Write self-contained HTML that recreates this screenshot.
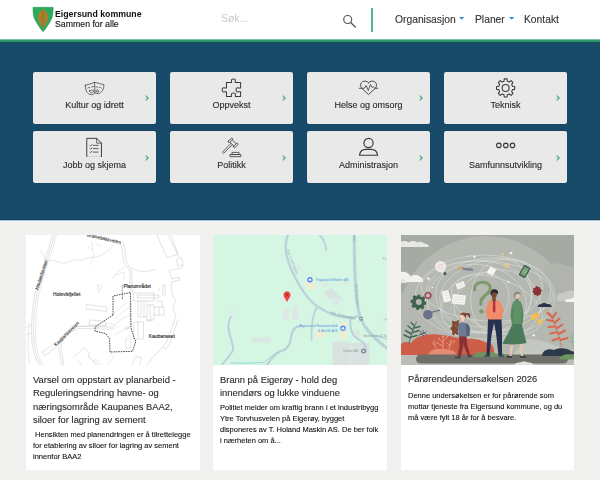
<!DOCTYPE html>
<html lang="no">
<head>
<meta charset="utf-8">
<title>Eigersund kommune</title>
<style>
*{box-sizing:border-box;margin:0;padding:0}
html,body{width:600px;height:480px;overflow:hidden;background:#f1f1f0;font-family:"Liberation Sans",sans-serif;color:#222}
.abs{position:absolute}
.brand1,.brand2,.sok,.nav,.tile .lbl,.card h3,.card p{will-change:transform}
#hdr{position:absolute;left:0;top:0;width:600px;height:39px;background:#fff}
#stripe{position:absolute;left:0;top:39px;width:600px;height:4px;z-index:2;background:linear-gradient(#7cc3a2 0,#7cc3a2 1px,#2f9e6b 1px,#2f9e6b 2px,#2b9068 2px,#2b9068 3px,#14535f 3px,#14535f 4px)}
#hero{position:absolute;left:0;top:42px;width:600px;height:178px;background:#184a69}
#heroline{position:absolute;left:0;top:219px;width:600px;height:3px;background:linear-gradient(#14405e 0,#14405e 1px,#a9c0cd 1px,#a9c0cd 2px,#eff4f7 2px,#eff4f7 3px)}
.brand1{position:absolute;left:54.6px;top:8.8px;font-size:8.75px;line-height:10.5px;font-weight:bold;color:#111;white-space:nowrap}
.brand2{position:absolute;left:54.6px;top:19.2px;font-size:8.75px;line-height:10.5px;color:#1a1a1a;-webkit-text-stroke:0.15px #1a1a1a;white-space:nowrap}
.sok{position:absolute;left:220.5px;top:13px;font-size:10.4px;line-height:12px;color:#c9c9c9;white-space:nowrap}
.vbar{position:absolute;left:371px;top:7.5px;width:1.6px;height:24.5px;background:#56b48c}
.nav{position:absolute;top:14px;font-size:10.3px;line-height:12px;color:#333;-webkit-text-stroke:0.12px #333;white-space:nowrap}
.caret{position:absolute;top:17.4px;width:5.4px;height:2.8px}
.tile{position:absolute;width:123px;height:52px;background:#e9e9e9;border-radius:2px;box-shadow:0 0 1px rgba(0,0,0,.2)}
.tile .lbl{position:absolute;left:0;width:123px;top:27.7px;text-align:center;font-size:9px;line-height:11px;color:#2a2a2a;-webkit-text-stroke:0.12px #2a2a2a;white-space:nowrap}
.tile svg.ic{position:absolute}
.tile.r2 .lbl{top:28.7px}
.tile.r2 svg.chev{top:23.6px}
.tile svg.chev{position:absolute;left:111.5px;top:23px;width:4px;height:6px}
.card{position:absolute;top:235px;width:174px;height:235px;background:#fff;overflow:hidden}
.card .img{position:absolute;left:0;top:0;width:174px;height:130px;overflow:hidden}
.card h3{position:absolute;left:7.3px;top:137.6px;width:160px;font-weight:normal;font-size:9.4px;line-height:13.4px;color:#2b2b2b;-webkit-text-stroke:0.12px #2b2b2b}
.card p{position:absolute;left:7.3px;font-size:7.5px;line-height:10.9px;color:#111;width:161px;-webkit-text-stroke:0.1px #111}
</style>
</head>
<body>
<div id="hdr"></div>
<div id="stripe"></div>
<div id="hero"></div>
<div id="heroline"></div>

<!-- logo -->
<svg class="abs" style="left:32px;top:6px" width="22" height="27" viewBox="32 6 22 27">
  <path d="M33,7.3 H53.1 C53.1,14 52.6,17 51,20 C49.4,23.2 47,27 43.05,31.8 C39.1,27 36.7,23.2 35.1,20 C33.5,17 33,14 33,7.3 Z" fill="#2cab5c" stroke="#23904c" stroke-width="0.5"/>
  <path d="M43.05,9 C44,9.8 45.6,10.2 45.3,11.9 C46.8,11.7 47.9,12.6 47.1,14.3 C48.5,14.6 48.9,16 47.6,17.4 C48.7,18.2 48.5,19.8 47,20.6 C47.8,21.7 47.2,23.2 45.7,23.6 C46.2,24.8 45.4,26.2 44,26.3 C44.1,27.3 43.6,28.2 43.3,28.5 L43.25,29.8 L42.85,29.8 L42.8,28.5 C42.5,28.2 42,27.3 42.1,26.3 C40.7,26.2 39.9,24.8 40.4,23.6 C38.9,23.2 38.3,21.7 39.1,20.6 C37.6,19.8 37.4,18.2 38.5,17.4 C37.2,16 37.6,14.6 39,14.3 C38.2,12.6 39.3,11.7 40.8,11.9 C40.5,10.2 42.1,9.8 43.05,9 Z" fill="#a9812e"/>
  <path d="M43.05,10.5 L43.05,28.5 M43.05,14.5 L45,12.8 M43.05,14.5 L41.1,12.8 M43.05,18.5 L45.8,16.3 M43.05,18.5 L40.3,16.3 M43.05,22.3 L45.3,20.3 M43.05,22.3 L40.8,20.3 M43.05,25.5 L44.5,24.2 M43.05,25.5 L41.6,24.2" fill="none" stroke="#8b6a22" stroke-width="0.45"/>
</svg>
<div class="brand1">Eigersund kommune</div>
<div class="brand2">Sammen for alle</div>

<div class="sok">Søk...</div>
<svg class="abs" style="left:341px;top:13px" width="17" height="16" viewBox="0 0 17 16">
  <circle cx="6.7" cy="6.5" r="4" fill="none" stroke="#555" stroke-width="1.15"/>
  <path d="M9.7 9.6 L14.3 14" stroke="#555" stroke-width="1.35" stroke-linecap="round"/>
</svg>
<div class="vbar"></div>
<div class="nav" style="left:394.6px">Organisasjon</div>
<svg class="caret" style="left:459.3px" viewBox="0 0 5.4 2.8"><path d="M0,0 H5.4 L2.7,2.8 Z" fill="#3b8fd0"/></svg>
<div class="nav" style="left:475px">Planer</div>
<svg class="caret" style="left:509.3px" viewBox="0 0 5.4 2.8"><path d="M0,0 H5.4 L2.7,2.8 Z" fill="#3b8fd0"/></svg>
<div class="nav" style="left:524px">Kontakt</div>

<!-- tiles -->
<div class="tile" style="left:33px;top:72px"><svg class="ic" style="left:45px;top:4px" width="32" height="24" viewBox="0 0 600 450"><g fill="none" stroke="#3a3a3a" stroke-linejoin="round" stroke-linecap="round" stroke-width="14" transform="translate(2,6)"><path d="M135,169 C160,160 215,146 248,135 C275,126 295,118 308,112 L315,311 C305,325 275,345 247,345 C222,340 205,332 195,326 C175,310 160,290 157,281 C145,255 138,225 135,169 Z"/><path d="M308,112 C330,118 355,124 375,128 C400,134 450,148 484,158 C484,175 482,195 480,206 C475,230 465,255 457,266 C448,282 432,300 420,307 C405,316 390,321 375,322 C355,323 340,321 330,319 L315,311"/><path d="M180,218 C195,210 210,208 221,211 M251,199 C265,192 280,190 292,192 M334,195 C348,194 360,199 368,206 M398,203 C412,203 427,209 435,218" stroke-width="13"/><path d="M214,274 C240,262 270,258 296,263 C292,290 275,306 255,308 C235,306 220,295 214,274 Z" stroke-width="13"/><path d="M334,282 C334,262 345,252 360,252 C375,252 386,262 386,282 Z" stroke-width="13"/></g></svg><div class="lbl">Kultur og idrett</div><svg class="chev" viewBox="0 0 4 6"><path d="M0.7 0.6 L3.2 3 L0.7 5.4" fill="none" stroke="#3aa877" stroke-width="1.1"/></svg></div>
<div class="tile" style="left:170px;top:72px"><svg class="ic" style="left:45px;top:2px" width="32" height="24" viewBox="0 0 600 450"><g fill="none" stroke="#3a3a3a" stroke-linejoin="round" stroke-linecap="round" stroke-width="19"><path d="M215,160 L312,160 L312,140 C298,100 325,95 345,95 C365,95 392,100 378,140 L378,160 L480,160 L480,262 L440,262 C400,250 395,278 395,298 C395,318 400,346 440,334 L480,334 L480,420 L382,420 L382,400 C392,362 365,358 345,358 C325,358 298,362 308,400 L308,420 L215,420 L215,334 L180,334 C140,346 135,318 135,298 C135,278 140,250 180,262 L215,262 Z"/></g></svg><div class="lbl">Oppvekst</div><svg class="chev" viewBox="0 0 4 6"><path d="M0.7 0.6 L3.2 3 L0.7 5.4" fill="none" stroke="#3aa877" stroke-width="1.1"/></svg></div>
<div class="tile" style="left:307px;top:72px"><svg class="ic" style="left:45px;top:2px" width="32" height="24" viewBox="0 0 600 450"><g fill="none" stroke="#3a3a3a" stroke-linejoin="round" stroke-linecap="round" stroke-width="17"><path d="M310,165 C280,128 228,124 195,146 C153,172 150,232 185,270 L310,385 L435,270 C470,232 467,172 425,146 C392,124 340,128 310,165 Z"/><path d="M135,268 L232,268 L266,215 L306,310 L346,195 L376,250 L400,240 L430,268 L482,268" stroke-width="15"/></g></svg><div class="lbl">Helse og omsorg</div><svg class="chev" viewBox="0 0 4 6"><path d="M0.7 0.6 L3.2 3 L0.7 5.4" fill="none" stroke="#3aa877" stroke-width="1.1"/></svg></div>
<div class="tile" style="left:444px;top:72px"><svg class="ic" style="left:45px;top:2px" width="32" height="24" viewBox="0 0 600 450"><g fill="none" stroke="#3a3a3a" stroke-linejoin="round" stroke-linecap="round" stroke-width="20"><path d="M281,134 L286,92 L338,92 L343,134 L380,149 L414,124 L450,160 L425,194 L440,231 L482,236 L482,288 L440,293 L425,330 L450,364 L414,400 L380,375 L343,390 L338,432 L286,432 L281,390 L244,375 L210,400 L174,364 L199,330 L184,293 L142,288 L142,236 L184,231 L199,194 L174,160 L210,124 L244,149 Z"/><circle cx="312" cy="262" r="66"/></g></svg><div class="lbl">Teknisk</div><svg class="chev" viewBox="0 0 4 6"><path d="M0.7 0.6 L3.2 3 L0.7 5.4" fill="none" stroke="#3aa877" stroke-width="1.1"/></svg></div>
<div class="tile r2" style="left:33px;top:131px"><svg class="ic" style="left:45px;top:2px" width="32" height="24" viewBox="0 0 600 450"><g fill="none" stroke="#3a3a3a" stroke-linejoin="round" stroke-linecap="round" stroke-width="18"><path d="M172,100 L350,100 L440,190 L440,457 L172,457 Z"/><path d="M350,100 L350,190 L440,190" stroke-width="14"/><path d="M225,232 L238,244 L262,216 M288,232 L378,232 M225,292 L238,304 L262,276 M288,292 L378,292 M225,358 L238,370 L262,342 M288,358 L378,358" stroke-width="15"/></g></svg><div class="lbl">Jobb og skjema</div><svg class="chev" viewBox="0 0 4 6"><path d="M0.7 0.6 L3.2 3 L0.7 5.4" fill="none" stroke="#3aa877" stroke-width="1.1"/></svg></div>
<div class="tile r2" style="left:170px;top:131px"><svg class="ic" style="left:45px;top:4px" width="32" height="24" viewBox="0 0 600 450"><g fill="none" stroke="#3a3a3a" stroke-linejoin="round" stroke-linecap="round" stroke-width="15"><path d="M250,115 L305,62 C322,52 338,68 330,85 L275,140 C258,150 240,132 250,115 Z"/><path d="M350,210 L405,158 C422,148 438,164 430,181 L375,235 C358,245 340,228 350,210 Z"/><path d="M326,92 L392,160 M282,136 L348,204"/><path d="M296,160 L140,322 L162,346 L322,186"/><path d="M288,366 L484,366 L484,406 L288,406 Z M326,326 L450,326 L450,366 L326,366 Z"/></g></svg><div class="lbl">Politikk</div><svg class="chev" viewBox="0 0 4 6"><path d="M0.7 0.6 L3.2 3 L0.7 5.4" fill="none" stroke="#3aa877" stroke-width="1.1"/></svg></div>
<div class="tile r2" style="left:307px;top:131px"><svg class="ic" style="left:45px;top:4px" width="32" height="24" viewBox="0 0 600 450"><g fill="none" stroke="#3a3a3a" stroke-linejoin="round" stroke-linecap="round" stroke-width="22"><circle cx="310" cy="150" r="86"/><path d="M140,380 C150,312 200,270 262,270 L358,270 C420,270 470,312 480,380 Z"/></g></svg><div class="lbl">Administrasjon</div><svg class="chev" viewBox="0 0 4 6"><path d="M0.7 0.6 L3.2 3 L0.7 5.4" fill="none" stroke="#3aa877" stroke-width="1.1"/></svg></div>
<div class="tile r2" style="left:444px;top:131px"><svg class="ic" style="left:45px;top:4px" width="32" height="24" viewBox="0 0 600 450"><g fill="none" stroke="#3a3a3a" stroke-linejoin="round" stroke-linecap="round" stroke-width="21"><circle cx="185" cy="195" r="42"/><circle cx="315" cy="195" r="42"/><circle cx="441" cy="195" r="42"/></g></svg><div class="lbl">Samfunnsutvikling</div><svg class="chev" viewBox="0 0 4 6"><path d="M0.7 0.6 L3.2 3 L0.7 5.4" fill="none" stroke="#3aa877" stroke-width="1.1"/></svg></div>

<!-- cards -->
<div class="card" style="left:26px">
  <div class="img" id="img1" style="background:#fff"><svg width="174" height="131" viewBox="0 0 174 131" style="display:block"><rect width="174" height="131" fill="#fff"/><g fill="none" stroke="#bfbfbf" stroke-width="0.45" stroke-linejoin="round" stroke-linecap="round"><path d="M26.5,0 C22,16 14,40 9,58 C6,72 5,92 6,106 C7,118 10,126 14,131"/><path d="M28.5,0 C24,16 16,40 11,58 C8,72 7,92 8,106 C9,118 12,126 16,131"/><path d="M30.5,0 C26,16 18,40 13,58 C10,72 9,92 10,106 C11,118 14,126 18,131" stroke-width="0.35"/><path d="M4,131 C1,118 2,100 3,88 M0,93 L6,90 M0,100 L5,98" stroke-width="0.35"/><path d="M14,15 C16,18 18,20 19,24" stroke-width="0.35"/><path d="M23,25 C28,25 32,27 36,28 C40,29 43,26 48,25 C52,24 55,26 59,24 C63,22 66,22 70,22 C76,21 82,16 88,10" stroke-width="0.4"/><path d="M66,8 L68,22 L64,30 M62,12 L66,14 M70,9 L75,11" stroke-width="0.35"/><path d="M72,50 L76,52 L73,57 Z" stroke-width="0.4"/><path d="M94,8 C97,12 96,20 98,27 C100,32 104,34 104,40 L104,57"/><path d="M96.5,7 C99.5,12 98.5,20 100.5,27 C102.5,31 106,33 106,40 L106,57"/><path d="M86,44 C90,38 95,34 99,32 M90,40 L98,37 L98,44" stroke-width="0.35"/><path d="M106,33 C112,37 122,38 130,34" stroke-width="0.4"/><path d="M131,0 L141,23 L152,19 L145,0 M142,0 L153,22"/><path d="M151,24 L156,23 L157,30 L152,31 Z"/><path d="M157,30 L156,33 L145,35 L143,36 L146,44 L153,42 L154,45 L146,47 L145,50 L147,62"/><path d="M137,50 L139,50 L139,60 L137,60 Z M132,53 L134,56"/><path d="M36,131 C35,122 32,114 33,108 C35,100 42,94 52,91.5 C60,91 68,92.5 88,92"/><path d="M38,131 C37,122 34.5,114 35.5,108.5 C37,101 44,96 52,93.5 C60,93 68,94.5 88,94"/><path d="M52,91.5 L70,90 M88,90 L96,84 L104,80" stroke-width="0.35"/><path d="M16.5,117 L28.5,108.5 L31,111.5 L19,120.5 Z"/><path d="M61,69.5 L81,72 L80.5,76.5 L60.5,74 Z"/><path d="M64,85 L80,86.5 L79.5,91 L63.5,90 Z"/><path d="M48,122 L58,112.5 L64,119 L62,121 L73,131 M52,126 L57,131 M66,128 L70,124 L76,131"/><path d="M84,118 L88,122 L80,131 M66,131 L70,128" stroke-width="0.35"/><path d="M88,79 L100,68 M89,84 L103,72 M70,93 L84,88 L92,92 M88,100 L104,92 L104,66" stroke-width="0.35"/><path d="M100,92 L103,92 L103,94 L100,94 Z M101,101 L104,101 M100,104 L105,104 L105,113 L100,113 Z" stroke-width="0.4"/><path d="M108,58 L128,58 L128,66 L108,66 Z M112,60 L133,60 L133,63 L112,63 Z"/><path d="M112,66 L112,82 L121,82 L121,66 M115,66 L115,80 M118,66 L118,82 M121,70 L128,70 L128,85 L121,85 M124,70 L124,82 M128,72 L138,72 L138,80 L128,80 M131,66 L136,66 L136,72 M133,72 L133,80"/><path d="M108,87 L117.5,87 L117.5,104 L108,104 Z M112,87 L112,102"/><path d="M121,82 L121,86 L125,86 L125,82"/><path d="M147,62 L150,66 C146,70 146,76 150,80 L149,84 L146,93 L143,100 L141,106 L137,112 L140,114 L144,108 L148,96 L152,85"/><path d="M137,112 L128,121 L120,131 M109,122 L106,131 M112,122 L116,123 L113,131 M110,121 L112,122"/></g><g fill="none" stroke="#2e2e2e" stroke-width="0.85" stroke-dasharray="1.6 0.9" stroke-linejoin="round"><path d="M87,80 L87,61 L104.500,57.500 L105,93 L108.700,104.600 L110,106 L106.500,116.300 L84,117 L83.600,104 L80,98.700 L69,96 L69,92 L87,80"/></g><path d="M96.300,50.200 L96.300,63 M97,50.200 L96.300,50.200" fill="none" stroke="#444" stroke-width="0.4"/><circle cx="96.300" cy="63.300" r="0.6" fill="#444"/><g font-family="'Liberation Sans', sans-serif"><text transform="translate(97.4,52.9)" font-size="4.86" fill="#2a2a2a" stroke="#2a2a2a" stroke-width="0.12">Planområdet</text><text transform="translate(27,61.2)" font-size="4.86" fill="#2a2a2a" stroke="#2a2a2a" stroke-width="0.12">Holevikfjellet</text><text transform="translate(122.7,102.7) scale(1.016,1)" font-size="4.86" fill="#2a2a2a" stroke="#2a2a2a" stroke-width="0.12">Kaubaneset</text><text transform="translate(12.3,55) rotate(-72) scale(1.006,1)" font-size="4.69" fill="#333" stroke="#333" stroke-width="0.1">Hovlandsveien</text><text transform="translate(30,111.5) rotate(-44.5) scale(1.018,1)" font-size="4.69" fill="#333" stroke="#333" stroke-width="0.1">Kaupanesveien</text><text transform="translate(60.5,1.2) rotate(13) scale(1.015,1)" font-size="4.69" fill="#333" stroke="#333" stroke-width="0.1">Grønebakkveien</text></g></svg></div>
  <h3>Varsel om oppstart av planarbeid - Reguleringsendring havne- og næringsområde Kaupanes BAA2, siloer for lagring av sement</h3>
  <p style="top:195px">&nbsp;Hensikten med planendringen er å tilrettelegge for etablering av siloer for lagring av sement innenfor BAA2</p>
</div>
<div class="card" style="left:213px">
  <div class="img" id="img2" style="background:#d3f5e0"><svg width="174" height="131" viewBox="0 0 174 131" style="display:block"><rect width="174" height="131" fill="#d4f6e3"/><g fill="#dfe6e6"><rect x="70" y="73" width="5.5" height="12"/><rect x="79.5" y="71" width="5.5" height="14"/><rect x="38.9" y="102.8" width="19" height="5" fill="#dbe7e4"/><rect x="16" y="76" width="7" height="5.5" fill="#dcefe6" transform="rotate(25 19 79)"/><rect x="11.5" y="104" width="3.5" height="4.5" fill="#dcefe6"/><path d="M67,62 L80,62 L80,66 L67,66 Z" fill="#e2e8e8"/><rect x="83" y="30" width="5" height="6" fill="#dcebe4"/><path d="M111,58 L118,53 L130,64 L123,70 Z" fill="#d9e4e2"/><path d="M108,49 L114,46.5 L116,50 L110,53 Z" fill="#dcebe4"/><rect x="131" y="46" width="4" height="4" fill="#dcebe4"/><rect x="119.7" y="106.8" width="17.6" height="24.2" fill="#d9e2e0"/><rect x="138" y="108" width="18.4" height="23" fill="#d9e2e0"/><rect x="141" y="95" width="6" height="8" fill="#dbe9e3"/><rect x="118" y="63" width="10" height="4" fill="#dcebe4"/></g><g fill="#f1edd4"><path d="M91.5,47.5 L99,44.5 L103,52.5 L95.5,55.5 Z"/><rect x="102.9" y="95" width="8.8" height="8"/><rect x="127" y="87" width="6" height="17.6"/></g><g fill="none" stroke="#bbd2da" stroke-linecap="round" stroke-linejoin="round"><path d="M74.8,0 C72.5,6 72,14 74,22 C76.5,32 82,43 88,53 C93,61 99,68 106,72.5 C114,77.5 124,82 134,82.5 C139,82.8 143,82 146.5,81" stroke-width="2.4"/><path d="M141.2,-1 C141.3,20 141.6,40 143,58 C144,72 147,85 153,93 C159,101 167,108 175,114" stroke-width="3"/><path d="M106.5,0 C110,3 112.5,8 113,15" stroke-width="1.8"/><path d="M17.6,82 C15,87 15,93 16.5,99 C18,105 20.5,110 20,115 C17,121 12,126 8,131" stroke-width="2"/><path d="M88,91 C82,91 79.5,95 78.5,100 C77.5,106 77,111 72,114.5 C68,116.5 65.5,116 62,120 C58,124 56,127 53,131" stroke-width="2.3"/><path d="M104,72 C101,78 99.5,84 99,90 C98.5,96 98.5,100 98.5,105" stroke-width="1.8"/><path d="M137.3,83 C137,90 138,97 141,101 C145,105 150,106 152,110 C153,113 153,115 153,117" stroke-width="2"/><path d="M160,100 L174,104" stroke-width="1.6"/><path d="M174,84 L171,85" stroke-width="1.6"/></g><path d="M17,127.8 C28,128.3 40,128.2 51,127.5 C55,124 60,120 65,117" fill="none" stroke="#7fcfd2" stroke-width="0.7"/><rect x="146.4" y="82.2" width="3.2" height="3.2" rx="0.5" fill="#6c7b86"/><rect x="147.2" y="83" width="1.6" height="1.4" fill="#e6eef0"/><path d="M74,66.8 C73,63.5 70.7,62.3 70.7,59.9 C70.7,58 72.2,56.6 74,56.6 C75.8,56.6 77.3,58 77.3,59.9 C77.3,62.3 75,63.5 74,66.8 Z" fill="#e8453c" stroke="#c5322a" stroke-width="0.3"/><circle cx="74" cy="59.8" r="1.1" fill="#a8231c"/><circle cx="97" cy="44.7" r="2.7" fill="#4a8af0"/><path d="M95.7,45.8 L95.7,44.3 L97,43.2 L98.3,44.3 L98.3,45.8 Z" fill="#fff"/><circle cx="130" cy="93.3" r="2.7" fill="#4a8af0"/><path d="M128.7,94.4 L128.7,92.9 L130,91.8 L131.3,92.9 L131.3,94.4 Z" fill="#fff"/><circle cx="150.5" cy="116" r="2.5" fill="#7b8a96"/><circle cx="150.5" cy="116" r="1.1" fill="#e9eeee"/><g font-family="'Liberation Sans', sans-serif"><text transform="translate(102.9,46) scale(0.964,1)" font-size="3.6" fill="#5b8fe8">Rogaland Bildeler AS</text><text transform="translate(86.5,92.3) scale(1.040,1)" font-size="3.6" fill="#5b8fe8">Egersund Numismatikk</text><text transform="translate(105,96.8)" font-size="3.6" fill="#5b8fe8">&amp; Antikk A/S</text><text transform="translate(130,117.2) scale(0.939,1)" font-size="3.6" fill="#8c9aa0">Uninor AS</text><text transform="translate(150.5,101.8) scale(0.959,1)" font-size="3.6" fill="#8c9aa0">Berlehsen &amp; Su</text><text transform="translate(169.6,25.2)" font-size="3.4" fill="#9aa8aa">Pu</text><text transform="translate(117.3,78.6) rotate(14)" font-size="3.2" fill="#7e8c92">Ytre Torvhusveien</text><text transform="translate(73.5,15) rotate(68) scale(1.040,1)" font-size="3.2" fill="#8fa2a6">Ytre Torvhusveien</text><text transform="translate(142.5,49) rotate(86) scale(1.048,1)" font-size="3.2" fill="#8fa2a6">Hovlandsveien</text><text transform="translate(140.2,0) rotate(88) scale(0.915,1)" font-size="3.2" fill="#8fa2a6">veien</text></g></svg></div>
  <h3>Brann på Eigerøy - hold deg innendørs og lukke vinduene</h3>
  <p style="top:168px">Politiet melder om kraftig brann i et industribygg Ytre Torvhusveien på Eigerøy, bygget disponeres av T. Holand Maskin AS. De ber folk i nærheten om å...</p>
</div>
<div class="card" style="left:401px;width:173px">
  <div class="img" id="img3" style="background:#a5aaa3;height:129.5px"><svg width="174" height="131" viewBox="0 0 174 131" style="display:block"><rect width="174" height="131" fill="#a5aaa3"/><circle cx="85" cy="90" r="89" fill="#b4b8b1"/><path d="M143,30 C150,27 160,28 174,33 L174,131 L143,131 Z" fill="#b0b4ad"/><rect x="0" y="58" width="174" height="73" fill="#b4b8b1"/><rect x="0" y="119" width="174" height="12" fill="#bbbeb8"/><path d="M0,6.5 C3,5.5 6,6 8,7.5 C10,5.5 14,5.5 16,7.5 C18,6 22,6.5 23,8.5 C26,8.5 28,10 28,12 L0,12 Z" fill="#e7e8e5"/><path d="M0,37 C4,36 8,38 9.5,41.5 C12,39.5 17,39.5 19.5,42 C22,43 22.500,45 22,47 L0,47 Z" fill="#f1f1ef"/><path d="M0,44 C3,44 5,45.5 6,48 L0,48 Z" fill="#e2e3e0"/><path d="M156,66 C155,61 159,57 164,57.5 C167,54.5 173,55 174,57 L174,66 Z" fill="#c9c9c5"/><path d="M164,67 C164,64.5 167,63 169.500,64 C171,62.5 173,62.5 174,63 L174,67 Z" fill="#f3f3f1"/><g fill="none" stroke="#e3e5e0" stroke-width="0.5" opacity="0.95"><ellipse cx="84" cy="62" rx="70" ry="42"/><ellipse cx="88" cy="60" rx="62" ry="37" transform="rotate(-6 88 60)"/><ellipse cx="82" cy="66" rx="58" ry="40" transform="rotate(8 82 66)"/><ellipse cx="90" cy="58" rx="52" ry="33" transform="rotate(-12 90 58)"/><ellipse cx="80" cy="64" rx="46" ry="34" transform="rotate(14 80 64)"/><ellipse cx="92" cy="66" rx="40" ry="30" transform="rotate(-20 92 66)"/><ellipse cx="86" cy="56" rx="66" ry="30" transform="rotate(4 86 56)"/><ellipse cx="96" cy="70" rx="48" ry="26" transform="rotate(22 96 70)"/><ellipse cx="74" cy="68" rx="36" ry="28" transform="rotate(-30 74 68)"/><ellipse cx="100" cy="62" rx="30" ry="38" transform="rotate(10 100 62)"/></g><path d="M125,104.6 C135,103 150,108 162,114 L168,122 L110,122 Z" fill="#c5c7c1"/><path d="M0,109 C3,106.500 7,106.500 10,108 C15,101 26,98.500 36,99.500 C46,100 54,102 60,104 C70,102.500 80,104.500 88,108.500 C91,109 93,112 93,116 L93,120 L0,120 Z" fill="#cd5e47"/><path d="M27,120 C28,115.500 33,113.500 40,114 C48,113.500 54,115.500 56,120 Z" fill="#e48d74"/><g fill="none" stroke="#f2ab93" stroke-width="0.7" stroke-linecap="round"><path d="M42,114 L42,102 M42,108 L38,104 M42,106 L46,102 M42,111 L36,108 M35,113 L33,107 M33,110 L31,108 M48,113.500 L50,106 M50,109.500 L53,106.500 M49,111 L46,108"/></g><g fill="#f2ab93"><circle cx="42" cy="101.500" r="0.8"/><circle cx="38" cy="103.700" r="0.7"/><circle cx="46" cy="101.700" r="0.7"/><circle cx="33" cy="106.600" r="0.7"/><circle cx="50" cy="105.600" r="0.7"/><circle cx="53.200" cy="106.200" r="0.7"/><circle cx="36" cy="107.800" r="0.6"/></g><rect x="15" y="119.500" width="152" height="9" rx="4.500" fill="#6f6f69"/><path d="M72,122 C73,118.500 78,116.500 82,117.500 C86,116 92,117 96,119 C100,117.500 105,118.500 107,122 Z" fill="#6e9160"/><path d="M141,121 C141,116 147,113 153,115 C157,112.500 166,112.500 170,116 C172,116 174,117 174,118 L174,121 Z" fill="#2b3a48"/><path d="M158,124.500 C159,120.500 165,118.500 170,119.500 C172,119 174,119.500 174,120 L174,124.500 Z" fill="#6e9663"/><path d="M113,131 C113.500,128.500 116,127 119,127.500 C121,126 125,126 127,127.500 C130,127 132.500,128.500 133,131 Z" fill="#e4e5e2"/><g fill="none" stroke="#3f6b58" stroke-width="0.8" stroke-linecap="round"><path d="M8,109 C9,101 12,93 15.500,87"/><path d="M9.500,103 L3,100 M10.500,99 L4.500,95.500 M12,95 L7,91 M13.500,91 L10,87.500 M10,102 L16,100.500 M11.500,97.500 L18,95.500 M13,93 L19,91.500" stroke-width="1.5"/></g><g fill="none" stroke="#34465c" stroke-width="0.7" stroke-linecap="round"><path d="M18,100 C20,99.500 23,98.500 25,97 M20.500,99.300 L19.500,96.500 M22.500,98.500 L22,95.500 M21,99.300 L23,101 M23.500,98 L25.500,99.500"/></g><g fill="none" stroke="#d9674e" stroke-linecap="round"><path d="M160.500,112 C158,100 154,88 148.500,77.500" stroke-width="0.7"/><path d="M150.500,81.500 L146.500,78 M152.500,86 L146,85 M154.500,91.500 L147.500,92 M156.500,97 L149.500,98.500 M158.500,103 L151.500,105.500 M151.500,83 L155,78 M153.500,88 L158.500,83.500 M155.500,93.500 L161.500,89.500 M157.500,99 L164,95.500 M159.500,105 L166.500,103" stroke-width="2.1"/></g><g fill="none" stroke="#7cb090" stroke-width="0.7" stroke-linecap="round"><path d="M172,112 L171,99 M171.500,104 L168.500,101.500 M171.300,107.500 L168,106 M171.200,102 L174,100 M171.600,108 L174,106.500"/></g><g transform="translate(17.800,67)"><path d="M-1.300,-7.200 L1.300,-7.200 L1.800,-5.300 L3.100,-4.700 L4.800,-5.700 L6.600,-3.700 L5.400,-2.100 L5.800,-0.700 L7.600,-0.100 L7.400,2.500 L5.500,2.900 L4.800,4.100 L5.600,5.900 L3.500,7.400 L2.100,6.100 L0.700,6.400 L0,8 L-2.500,7.800 L-2.900,5.900 L-4.200,5.200 L-5.900,6.100 L-7.500,4.100 L-6.300,2.600 L-6.600,1.200 L-8.300,0.500 L-8,-2 L-6.100,-2.400 L-5.400,-3.600 L-6.200,-5.300 L-4.200,-6.900 L-2.700,-5.700 L-1.600,-5.900 Z" fill="#3f6350"/><circle r="3" fill="#b4b8b1"/></g><g transform="translate(27,60.500)"><circle r="2.700" fill="none" stroke="#a34a55" stroke-width="1.400"/><circle r="3.500" fill="none" stroke="#a34a55" stroke-width="1" stroke-dasharray="1 1.200"/></g><path d="M30,77.500 L38.500,75.300" stroke="#62667d" stroke-width="1.100" stroke-linecap="round"/><circle cx="26.900" cy="79.700" r="4.800" fill="#6d7189"/><circle cx="39.600" cy="31.500" r="5.600" fill="#f0e9e7"/><path d="M37.500,35.500 L42.500,35.500 L44,38 L41.500,38.500 Z" fill="#f0ebe9"/><path d="M42,37.500 L45,37 L45.500,39.500 L43.500,40.500 Z" fill="#4e5a4c"/><circle cx="39.900" cy="31.500" r="2.200" fill="none" stroke="#e5b9b6" stroke-width="0.500"/><path d="M56.500,32 L60.500,31.500 L61.500,34.500 L58,35 Z" fill="#dda36b"/><path d="M61,32.500 L71.500,33.500 L72,36 L62,35 Z" fill="#7d8192"/><g fill="#f2f2ef"><path d="M27.500,41.500 L28.200,43 L29.700,43.500 L28.200,44.200 L27.500,45.700 L26.800,44.200 L25.300,43.500 L26.800,43 Z"/><path d="M73.500,19.500 L74.100,21 L75.600,21.600 L74.100,22.200 L73.500,23.700 L72.900,22.200 L71.400,21.600 L72.900,21 Z"/><rect x="108.800" y="16.900" width="2.400" height="2.400"/><circle cx="107.500" cy="47" r="1"/><circle cx="132.700" cy="100.200" r="1.200"/><circle cx="31.500" cy="52.500" r="0.800"/><circle cx="68" cy="21" r="0.700"/><circle cx="73" cy="86" r="0.700"/></g><g fill="#e9c98c"><path d="M106,26.800 L107,29 L109.300,29.300 L107.600,30.900 L108,33.200 L106,32.100 L104,33.200 L104.400,30.900 L102.700,29.300 L105,29 Z"/><path d="M101.500,17.300 L102,18.500 L103.200,18.700 L102.300,19.600 L102.500,20.800 L101.500,20.200 L100.500,20.800 L100.700,19.600 L99.800,18.700 L101,18.500 Z"/></g><g fill="#f3f3f1"><path d="M54.500,49 L62.500,46 L64.500,51.500 L56.500,54.500 Z"/><path d="M40.500,56.500 L47,55 L50.500,66 L43,67.500 Z"/><path d="M52,59 L65,60.500 L63.500,70 L50.500,68.500 Z"/><path d="M89.500,31.500 L95.500,34.500 L91.500,41 L85.500,37.500 Z"/></g><g stroke="#bdbfba" stroke-width="0.300" fill="none"><path d="M57,50 L62,48.200 M57.600,51.600 L62.600,49.800 M42.500,58.500 L46.500,57.600 M43.200,61 L47.700,60 M44,63.500 L48.500,62.500 M53.500,61.500 L63,62.600 M53.200,64 L62.700,65.100 M52.900,66.500 L62.400,67.600"/></g><g transform="translate(123.600,36.500) rotate(30)"><rect x="-3.600" y="-5.800" width="7.200" height="11.600" rx="0.800" fill="#33503f"/><rect x="-2.700" y="-4.600" width="5.400" height="9" fill="#78a078"/><circle r="1.500" fill="none" stroke="#a9c7a2" stroke-width="0.500"/></g><path d="M132,53.500 L134.500,52.500 C134,51 136.500,50.300 136.800,52 L139,52.200 L139.500,54.500 C141,54 141.500,56.300 140,56.700 L140,59.500 L137.800,59.800 C138,61.300 135.600,61.500 135.500,60 L133,60 L132.800,57.700 C131.300,58 131,55.800 132.500,55.600 Z" fill="#8a3438"/><path d="M74,56 C72,50 78,46 84,47.500 C90,49 91,55 86.500,58.500 C83,61 81,62.500 81.500,65.500" fill="none" stroke="#7c9a6b" stroke-width="3"/><circle cx="80.500" cy="76.500" r="2.200" fill="#7c9a6b"/><path d="M80.500,63 C79.500,66 79.500,68 80,70.500" fill="none" stroke="#7c9a6b" stroke-width="2.800"/><g fill="#f1b955"><circle cx="132.400" cy="82" r="2.900"/><circle cx="135.600" cy="80.200" r="2.700"/><circle cx="139" cy="86.500" r="2.700"/></g><g fill="none" stroke="#f6d48c" stroke-width="0.400"><circle cx="132.400" cy="82" r="1.800"/><circle cx="139" cy="86.500" r="1.700"/></g><path d="M136.800,72 C136.500,70 138.500,69 140,69.500 C141,67.500 145,67.500 146,69.300 C148,68.600 150.500,69.600 150.700,72 Z" fill="#2e3048"/><path d="M144.500,73.500 L145.300,75.500 C145.300,76.500 143.700,76.500 143.700,75.500 Z" fill="#e39a52"/><path d="M58,101 L63.500,101 L62,112 L59.500,122 L56.500,122 L58.500,111 Z" fill="#8a3038"/><path d="M60,101 L65.500,101 L66.500,111 L69.500,120.500 L67,121.500 L63,111 Z" fill="#8a3038"/><path d="M54,122 L59.500,122 L59.500,123.300 L53,123.300 Z M67,121.300 L70.500,120 L71.200,121.300 L67.500,122.800 Z" fill="#3a4258"/><path d="M62.500,88.500 C66.500,87.500 69,90 69,95 L68.500,101 L63,101.500 Z" fill="#56627d"/><path d="M57.500,88.500 C59,87 63,87 64.500,88.500 L65.500,101.500 L57.500,101.500 Z" fill="#6c7a93"/><path d="M58,89 L55.500,95 L57,96 L59.500,92 Z" fill="#6c7a93"/><circle cx="62" cy="81.300" r="3.300" fill="#f1cdb8"/><path d="M60.300,86.500 L63,86.500 L63,84 L60.300,84 Z" fill="#f1cdb8"/><path d="M59,80.500 C59,77.500 63,76.500 65.300,78.500 C66.500,77.500 69,78 69.500,80 L68.500,83.500 L67.200,80.500 L65.500,80 C65,81.500 64.800,82.500 65,84 L63.500,81.500 C62,79.500 60.500,79.500 59,80.500 Z" fill="#7d4a3a"/><g fill="#7d4a2e"><circle cx="54.500" cy="89.500" r="3.200"/><circle cx="52" cy="87" r="1.200"/><circle cx="57" cy="86.500" r="1.200"/><ellipse cx="54" cy="95" rx="3" ry="3.600"/><ellipse cx="51" cy="93" rx="1.200" ry="2" transform="rotate(30 51 93)"/><ellipse cx="52.500" cy="98.500" rx="1.300" ry="1.800"/><ellipse cx="56" cy="98.300" rx="1.300" ry="1.800"/></g><ellipse cx="54.800" cy="90.500" rx="1.300" ry="1" fill="#a06a48"/><path d="M87,84 L100.500,84 L101,96 L101,120 L97.500,120 L95,98 L93,88 L90.500,100 L88.500,120 L85.500,120 L86.500,98 Z" fill="#283050"/><path d="M84,120 L89,120 L89,121.800 L83,121.800 Z M97.500,120 L102,120 L103.500,121.800 L97.500,121.800 Z" fill="#3a4268"/><path d="M88.500,65.500 C90.500,64 95.500,64 97.500,65.500 L100,67.500 L101.500,76 L100,84.500 L87.500,84.500 L86.500,76 L87,68 Z" fill="#f08c69"/><path d="M88,67 L84,76 L87,84 L88.500,83 L86.500,76 L89.500,70 Z M98.500,67 L103,75 L100.500,84 L99,83 L100.500,76 L97.500,70 Z" fill="#f08c69"/><path d="M92,66 L94.200,66 L94.500,76 L93.200,78 L91.800,76 Z" fill="#b2333a"/><path d="M91.300,62 L94.700,62 L94.700,66 L93,67 L91.300,66 Z" fill="#7a4a36"/><ellipse cx="93.100" cy="59.500" rx="2.800" ry="3.300" fill="#7a4a36"/><path d="M89.600,59.500 C88.800,55.500 92,53.500 95,54.500 C97.500,55.500 97.500,58 96.500,59.500 C95.500,57.500 93,57 91.500,58 C90.800,58.500 90.500,59.500 90.600,61 Z" fill="#2a2330"/><path d="M110.500,108 L112.500,108 L111.500,115 L110.500,121 L108.500,121 L109,114 Z M119,108 L121,108 L121,114 L122,121 L120,121 L119,114 Z" fill="#e9c4ae"/><path d="M105,121 L111,121 L111,122.800 L106,122.800 Z M119,121 L124.500,121 L125.500,122.800 L119,122.800 Z" fill="#3a3f4a"/><path d="M112,87.500 L120.500,87.500 C122,95 124,102 125.500,108 C120,109.500 107,110 101.500,108.500 C105,102 109,95 112,87.500 Z" fill="#4b7a5b"/><path d="M112.500,66.500 C114,65 117.500,65 119.500,66.500 C121.500,70 122.500,76 122.200,82 L121.500,89 L111,89 L110,82 C109.500,76 110.500,70 112.500,66.500 Z" fill="#5f9169"/><path d="M112,70 L109.500,80 L111,88 L112.500,87.500 L112,80 Z M120.500,70 L122.500,80 L121.500,88 L120,87.500 L120.500,80 Z" fill="#568560"/><path d="M114.500,63.500 L117.500,63.500 L118,67.500 L114,67.500 Z" fill="#5f9169"/><ellipse cx="116.200" cy="60.800" rx="2.500" ry="3" fill="#e9c4ae"/><path d="M113.200,62.500 C112,59 113.500,56.500 116.500,56.500 C119.500,56.500 120.200,59 119.500,60 C118,58.500 116,58.500 114.800,60 C114.300,61 114.300,62.500 114.500,64 Z" fill="#8d8f84"/><rect x="0" y="129.600" width="174" height="1.400" fill="#fdfdfd" opacity="0.0"/></svg></div>
  <h3 style="top:137px">Pårørendeundersøkelsen 2026</h3>
  <p style="top:155.8px">Denne undersøkelsen er for pårørende som mottar tjeneste fra Eigersund kommune, og du må være fylt 18 år for å besvare.</p>
</div>
</body>
</html>
